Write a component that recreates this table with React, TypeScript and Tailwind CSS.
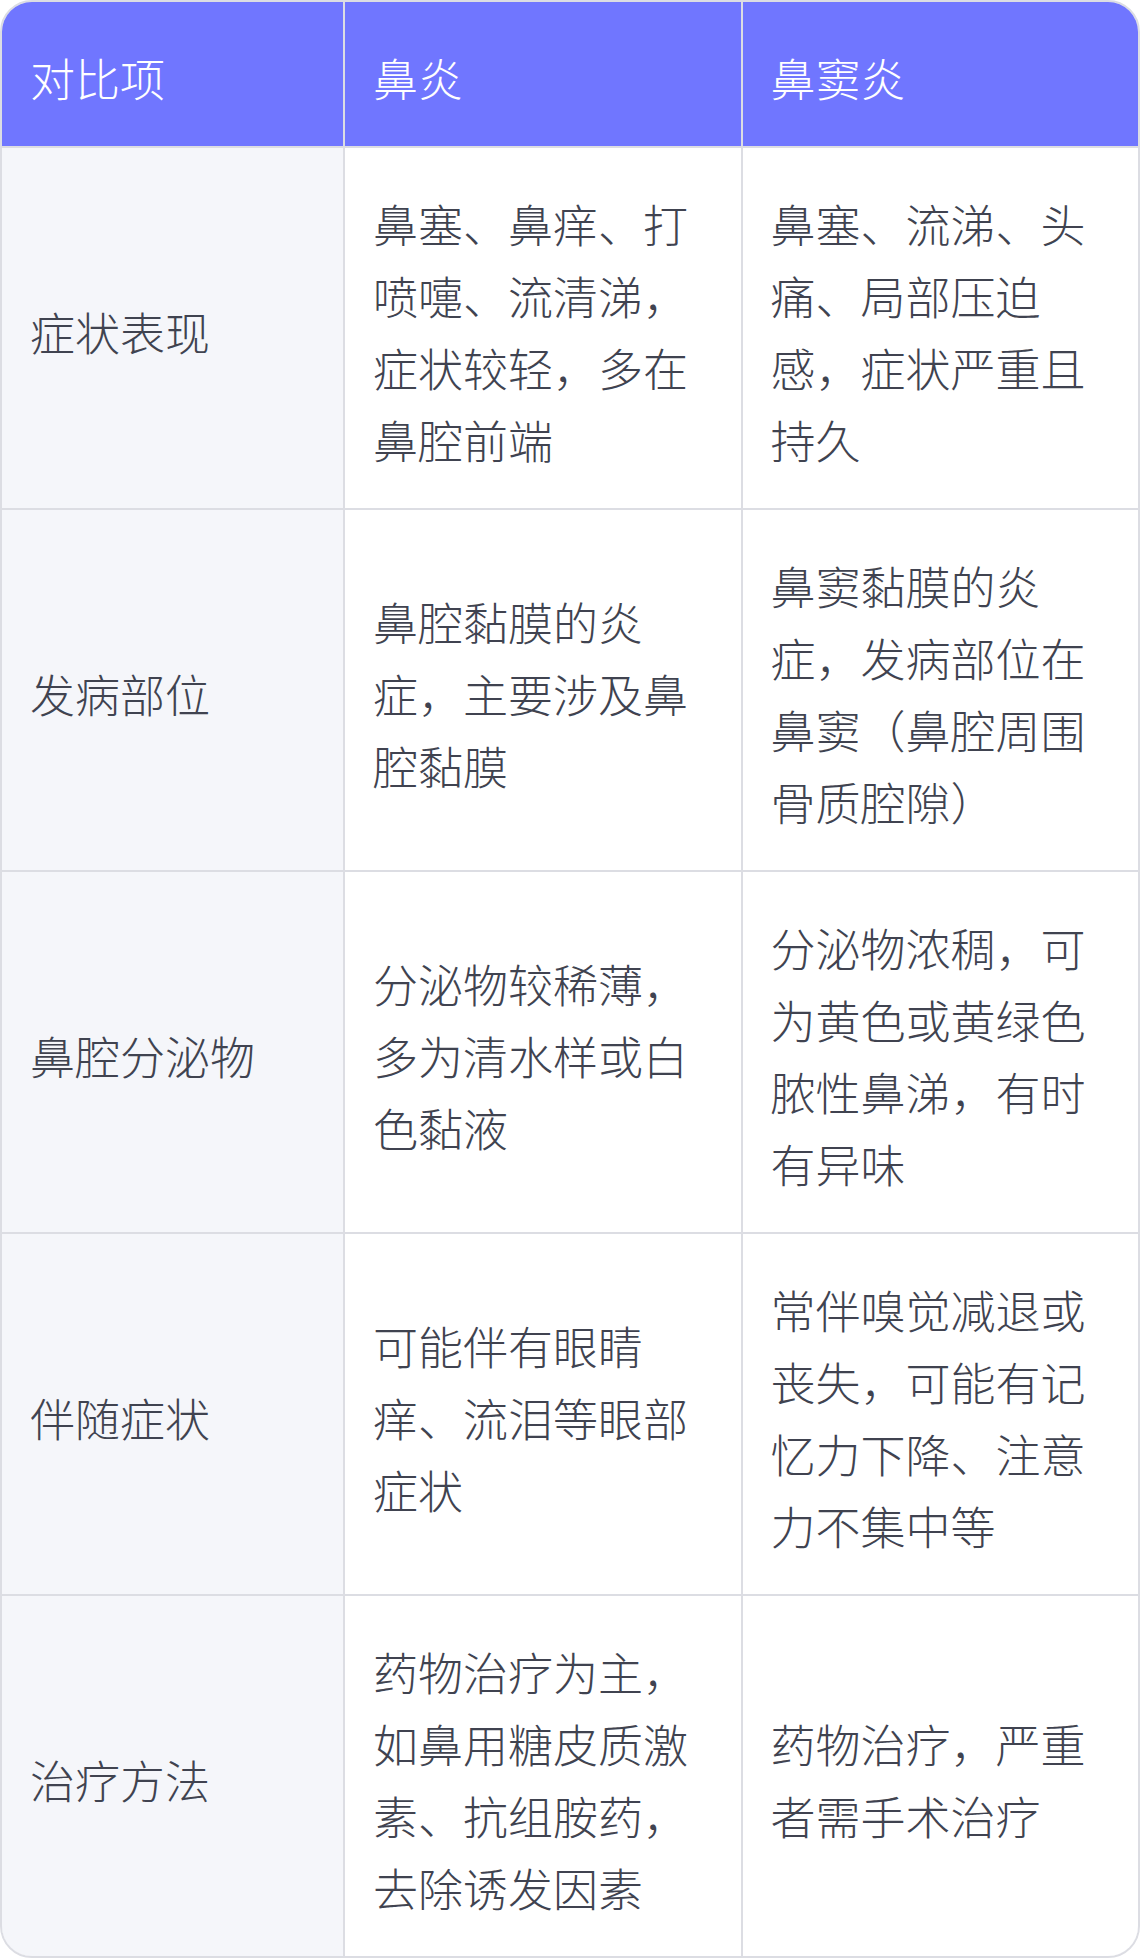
const rows: { label: string; rhinitis: string; sinusitis: string }[] = [
  {
    label: "症状表现",
    rhinitis: "鼻塞、鼻痒、打喷嚏、流清涕，症状较轻，多在鼻腔前端",
    sinusitis: "鼻塞、流涕、头痛、局部压迫感，症状严重且持久",
  },
  {
    label: "发病部位",
    rhinitis: "鼻腔黏膜的炎症，主要涉及鼻腔黏膜",
    sinusitis: "鼻窦黏膜的炎症，发病部位在鼻窦（鼻腔周围骨质腔隙）",
  },
  {
    label: "鼻腔分泌物",
    rhinitis: "分泌物较稀薄，多为清水样或白色黏液",
    sinusitis: "分泌物浓稠，可为黄色或黄绿色脓性鼻涕，有时有异味",
  },
  {
    label: "伴随症状",
    rhinitis: "可能伴有眼睛痒、流泪等眼部症状",
    sinusitis: "常伴嗅觉减退或丧失，可能有记忆力下降、注意力不集中等",
  },
  {
    label: "治疗方法",
    rhinitis: "药物治疗为主，如鼻用糖皮质激素、抗组胺药，去除诱发因素",
    sinusitis: "药物治疗，严重者需手术治疗",
  },
];

const cell = "flex items-center pl-[28px] pr-[30px] pt-[40px] pb-[32px] leading-[72px]";

function App() {
  return (
    <div
      className="w-[1140px] bg-white text-[45px] font-extralight text-[#404350]"
      style={{ fontFamily: '"Noto Sans CJK SC", "Noto Sans", sans-serif' }}
    >
      <div className="border-2 border-[#dcdde3] rounded-[32px] overflow-hidden">
        <div className="grid grid-cols-[341px_1fr_1fr] gap-[2px] bg-[#dcdde3]">
          <div className={`${cell} bg-[#7076ff] text-white`}>对比项</div>
          <div className={`${cell} bg-[#7076ff] text-white`}>鼻炎</div>
          <div className={`${cell} bg-[#7076ff] text-white`}>鼻窦炎</div>
          {rows.map((row) => (
            <>
              <div key={row.label + "-l"} className={`${cell} bg-[#f5f6fa]`}>
                {row.label}
              </div>
              <div key={row.label + "-a"} className={`${cell} bg-white`}>
                {row.rhinitis}
              </div>
              <div key={row.label + "-b"} className={`${cell} bg-white`}>
                {row.sinusitis}
              </div>
            </>
          ))}
        </div>
      </div>
    </div>
  );
}

export default App;
